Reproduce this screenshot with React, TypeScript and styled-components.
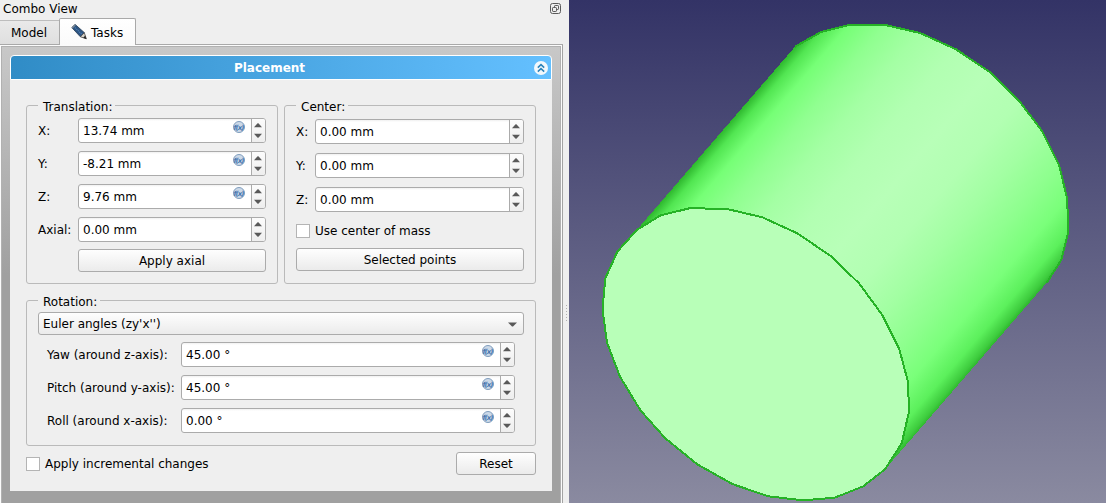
import React from 'react';
import styled, { createGlobalStyle } from 'styled-components';

const GlobalStyle = createGlobalStyle`
  * { box-sizing: border-box; }
  body { margin: 0; overflow: hidden; }
`;

const Window = styled.div`
  display: flex;
  width: 1106px;
  height: 503px;
  background: #efefef;
  color: #000;
  font: 12px/15px "DejaVu Sans", sans-serif;
  white-space: nowrap;
`;

const Dock = styled.div`
  display: flex;
  flex-direction: column;
  width: 563px;
`;

const DockTitle = styled.div`
  display: flex;
  justify-content: space-between;
  height: 18px;
  padding: 2px 1px 0 3px;
`;

const TabBar = styled.div`
  display: flex;
  align-items: flex-end;
  height: 27px;
  box-shadow: inset 0 -1px #a9a9a9;
`;

const Tab = styled.div<{ $active?: boolean }>`
  display: flex;
  align-items: center;
  gap: 4px;
  width: ${p => (p.$active ? 77 : 59)}px;
  height: ${p => (p.$active ? 27 : 25)}px;
  padding: 2px 0 0 11px;
  border: solid #a9a9a9;
  border-width: ${p => (p.$active ? '1px 1px 0' : '1px 0 1px')};
  border-color: ${p => (p.$active ? '#a9a9a9' : '#bdbdbd #a9a9a9 #a9a9a9')};
  border-radius: ${p => (p.$active ? '2px 2px 0 0' : '0')};
  background: ${p => (p.$active ? 'linear-gradient(#fff, #fafafa)' : 'linear-gradient(#e9e9e9, #dfdfdf)')};
`;

const TabFrame = styled.div`
  flex: 1;
  padding: 1px 1px 0 1px;
  background: #fbfbfb;
  border-right: 1px solid #a3a3a3;
`;

const TaskArea = styled.div`
  height: 457px;
  padding: 8px 8px 0;
  border: solid #b1b1b1;
  border-width: 1px 1px 0 1px;
  background: linear-gradient(#c8c8c8, #a0a0a0 50%);
`;

const TaskHeader = styled.div`
  position: relative;
  display: flex;
  align-items: center;
  justify-content: center;
  height: 25px;
  padding: 2px 23px 0 0;
  border: 1px solid #fff;
  border-radius: 4px 4px 0 0;
  background: linear-gradient(90deg, #308cc6, #64c0ff);
  color: #fff;
  font-weight: bold;
`;

const Collapse = styled.svg`
  position: absolute;
  right: 3px;
  top: 5px;
`;

const TaskBody = styled.div`
  height: 411px;
  padding: 19px 16px 0;
  background: #efefef;
`;

const GroupRow = styled.div`
  display: flex;
  gap: 6px;
`;

const Group = styled.fieldset<{ $w: number; $h: number }>`
  width: ${p => p.$w}px;
  height: ${p => p.$h}px;
  margin: 0;
  padding: 0 11px;
  border: 1px solid #bababa;
  border-radius: 3px;
`;

const Legend = styled.legend`
  height: 13px;
  padding: 1px 3px 0 5px;
`;

const Fields = styled.div<{ $top: number; $gap: number; $label: number; $inset?: number }>`
  display: grid;
  grid-template-columns: ${p => p.$label}px 1fr;
  grid-auto-rows: 26px;
  row-gap: ${p => p.$gap}px;
  align-items: start;
  padding: ${p => p.$top}px ${p => p.$inset ?? 0}px 0;
  line-height: 26px;
`;

const Spin = styled.div`
  display: flex;
  justify-content: space-between;
  height: 25px;
  padding-left: 4px;
  border: 1px solid #ababab;
  border-radius: 3px;
  background: linear-gradient(#f0f0f0, #fff 2px);
  line-height: 24px;
`;

const SpinEnd = styled.div`
  display: flex;
  gap: 6px;
`;

const Arrows = styled.div`
  display: flex;
  width: 14px;
  border-left: 1px solid #ababab;
  background: linear-gradient(#fcfcfc, #eee);
  border-radius: 0 2px 2px 0;
`;

const Button = styled.div<{ $w?: number }>`
  display: flex;
  align-items: center;
  justify-content: center;
  width: ${p => (p.$w ? p.$w + 'px' : 'auto')};
  height: 23px;
  padding-top: 1px;
  border: 1px solid #ababab;
  border-radius: 3px;
  background: linear-gradient(#fefefe, #ebebeb);
`;

const AxialButton = styled(Button)`
  margin: 6px 0 0 40px;
`;

const Combo = styled(Button)`
  justify-content: space-between;
  margin-top: 5px;
  padding: 1px 6px 0 4px;
`;

const CheckRow = styled.div`
  display: flex;
  align-items: center;
  gap: 5px;
  height: 15px;
`;

const CheckLabel = styled.span`
  padding-top: 1px;
`;

const CenterCheck = styled(CheckRow)`
  margin: 10px 0;
`;

const Box = styled.span`
  width: 14px;
  height: 14px;
  border: 1px solid #b4b4b4;
  background: #fff;
`;

const RotationSlot = styled.div`
  margin-top: 10px;
`;

const Footer = styled.div`
  display: flex;
  align-items: center;
  justify-content: space-between;
  margin-top: 6px;
`;

const Splitter = styled.div`
  display: flex;
  align-items: flex-start;
  width: 6px;
  padding: 305px 0 0 3px;
`;

const Grip = styled.div`
  width: 1px;
  height: 16px;
  background: repeating-linear-gradient(#b0b0b0 0 1px, transparent 1px 3px);
`;

const Viewport = styled.div`
  width: 537px;
  height: 503px;
  background: linear-gradient(#333366, #8a8aa0);
`;

const Pencil = () => (
  <svg width="16" height="18" viewBox="0 0 16 18">
    <path d="M.8 3.6 4.1.4 13.4 8.7 9.4 12.8Z" fill="#2c5584" stroke="#20364f" strokeWidth=".8" />
    <path d="M2.6 2.3 11.4 10.8" stroke="#5a86b8" strokeWidth="1.1" strokeDasharray="1 1" />
    <path d="M.6 3.6 4.1.2 5 1 1.6 4.5Z" fill="#7a8794" />
    <path d="m9.4 12.8 3.9-4.1 2 6.1Z" fill="#d8d3c8" stroke="#444" strokeWidth=".8" />
    <path d="m12.2 13.7 2-2.1 1.2 3.3Z" fill="#222" />
  </svg>
);

const FloatIcon = () => (
  <svg width="12" height="13" viewBox="0 0 12 13" fill="none" stroke="#5a5a5a">
    <rect x=".5" y="1.5" width="10" height="10" rx="2" />
    <rect x="4.5" y="3.5" width="4" height="4" rx=".7" />
    <rect x="2.5" y="5.5" width="4" height="4" rx=".7" fill="#efefef" />
  </svg>
);

const FxIcon = () => (
  <svg width="12" height="23" viewBox="0 0 12 23">
    <circle cx="6" cy="8" r="5.5" fill="#ccd9e8" stroke="#7f9dbd" />
    <text x="5.5" y="10.6" textAnchor="middle" fontSize="7" fontStyle="italic" fontWeight="bold" letterSpacing="-1" fill="#4a78b0">f(x)</text>
  </svg>
);

const SpinArrows = () => (
  <Arrows>
    <svg width="13" height="23" viewBox="0 0 13 23" fill="#595959">
      <path d="M2 8.2 5.6 4.2h.8l3.6 4Z" />
      <path d="M2 14.8h8l-3.6 4h-.8Z" />
    </svg>
  </Arrows>
);

const SpinBox = ({ value, fx }: { value: string; fx?: boolean }) => (
  <Spin>
    <span>{value}</span>
    <SpinEnd>
      {fx && <FxIcon />}
      <SpinArrows />
    </SpinEnd>
  </Spin>
);

const FRONT = '690.7,208 728.3,209.3 762.3,217.3 797.3,233.3 830.7,256 859,283.3 882.3,315 899,348.3 908,381.7 909,411.7 901.7,443.3 885,469.3 863.3,486.3 834.7,497.7 803,500.3 768,496.3 732.3,484 697.3,464.3 665.7,438.7 640.7,410.7 620,376.7 607,342.7 602.5,309.3 605.3,278.3 617.3,251.7 636.7,230 660.7,215.3';
const BACK = '795,46.7 821,32 849.3,25 885.3,25 920,33 956,49.3 990.7,72.7 1019.3,101 1042,131 1059,165 1067.3,199 1068,233.3 1061.3,260 1046.7,282.7';

// Distance across the cylinder's axis, and the lit colour there.
const SHADES: [number, string][] = [
  [632.7, '#2eb82e'],
  [642.8, '#52e652'],
  [659.5, '#76ff76'],
  [686.7, '#90ff90'],
  [718.4, '#a4ffa4'],
  [756.3, '#b2ffb2'],
  [797.9, '#b8ffb8'],
  [838, '#b2ffb2'],
  [874.8, '#a2ffa2'],
  [909.8, '#8eff8e'],
  [938.3, '#7aff7a'],
  [961.5, '#5cf05c'],
  [973.6, '#3ecc3e'],
  [977.4, '#2fb82f'],
];

const Cylinder = () => (
  <svg width="537" height="503" viewBox="569 0 537 503">
    <defs>
      <linearGradient id="side" gradientUnits="userSpaceOnUse" x1="479.3" y1="412.8" x2="740.4" y2="637.8">
        {SHADES.map(([t, c]) => (
          <stop key={t} offset={(t - 632.7) / 344.7} stopColor={c} />
        ))}
      </linearGradient>
    </defs>
    <g shapeRendering="crispEdges">
      <polygon points={`636.7,230 ${BACK} 901.7,450 885,469.3`} fill="url(#side)" />
      <polyline points={BACK} fill="none" stroke="#26b226" strokeWidth="2" />
      <polygon points={FRONT} fill="#b8ffb8" stroke="#26b226" strokeWidth="2" />
    </g>
  </svg>
);

export default function App() {
  return (
    <Window>
      <GlobalStyle />
      <Dock>
        <DockTitle>
          <span>Combo View</span>
          <FloatIcon />
        </DockTitle>
        <TabBar>
          <Tab>Model</Tab>
          <Tab $active>
            <Pencil />
            Tasks
          </Tab>
        </TabBar>
        <TabFrame>
          <TaskArea>
            <TaskHeader>
              Placement
              <Collapse width="14" height="14" viewBox="0 0 14 14">
                <circle cx="7" cy="7" r="7" fill="#f3f8fc" />
                <path d="m3.8 6.6 3.2-3 3.2 3M3.8 10.6l3.2-3 3.2 3" fill="none" stroke="#2b83ba" strokeWidth="1.5" />
              </Collapse>
            </TaskHeader>
            <TaskBody>
              <GroupRow>
                <Group $w={252} $h={185}>
                  <Legend>Translation:</Legend>
                  <Fields $top={6} $gap={7} $label={40}>
                    <span>X:</span>
                    <SpinBox value="13.74 mm" fx />
                    <span>Y:</span>
                    <SpinBox value="-8.21 mm" fx />
                    <span>Z:</span>
                    <SpinBox value="9.76 mm" fx />
                    <span>Axial:</span>
                    <SpinBox value="0.00 mm" />
                  </Fields>
                  <AxialButton>Apply axial</AxialButton>
                </Group>
                <Group $w={252} $h={185}>
                  <Legend>Center:</Legend>
                  <Fields $top={7} $gap={8} $label={19}>
                    <span>X:</span>
                    <SpinBox value="0.00 mm" />
                    <span>Y:</span>
                    <SpinBox value="0.00 mm" />
                    <span>Z:</span>
                    <SpinBox value="0.00 mm" />
                  </Fields>
                  <CenterCheck>
                    <Box />
                    <CheckLabel>Use center of mass</CheckLabel>
                  </CenterCheck>
                  <Button>Selected points</Button>
                </Group>
              </GroupRow>
              <RotationSlot>
                <Group $w={510} $h={152}>
                  <Legend>Rotation:</Legend>
                  <Combo>
                    <span>Euler angles (zy'x'')</span>
                    <svg width="9" height="5" viewBox="0 0 9 5">
                      <path d="M0 .5h9L5 4.5H4Z" fill="#595959" />
                    </svg>
                  </Combo>
                  <Fields $top={7} $gap={7} $label={134} $inset={9}>
                    <span>Yaw (around z-axis):</span>
                    <SpinBox value="45.00 °" fx />
                    <span>Pitch (around y-axis):</span>
                    <SpinBox value="45.00 °" fx />
                    <span>Roll (around x-axis):</span>
                    <SpinBox value="0.00 °" fx />
                  </Fields>
                </Group>
              </RotationSlot>
              <Footer>
                <CheckRow>
                  <Box />
                  <CheckLabel>Apply incremental changes</CheckLabel>
                </CheckRow>
                <Button $w={80}>Reset</Button>
              </Footer>
            </TaskBody>
          </TaskArea>
        </TabFrame>
      </Dock>
      <Splitter>
        <Grip />
      </Splitter>
      <Viewport>
        <Cylinder />
      </Viewport>
    </Window>
  );
}
